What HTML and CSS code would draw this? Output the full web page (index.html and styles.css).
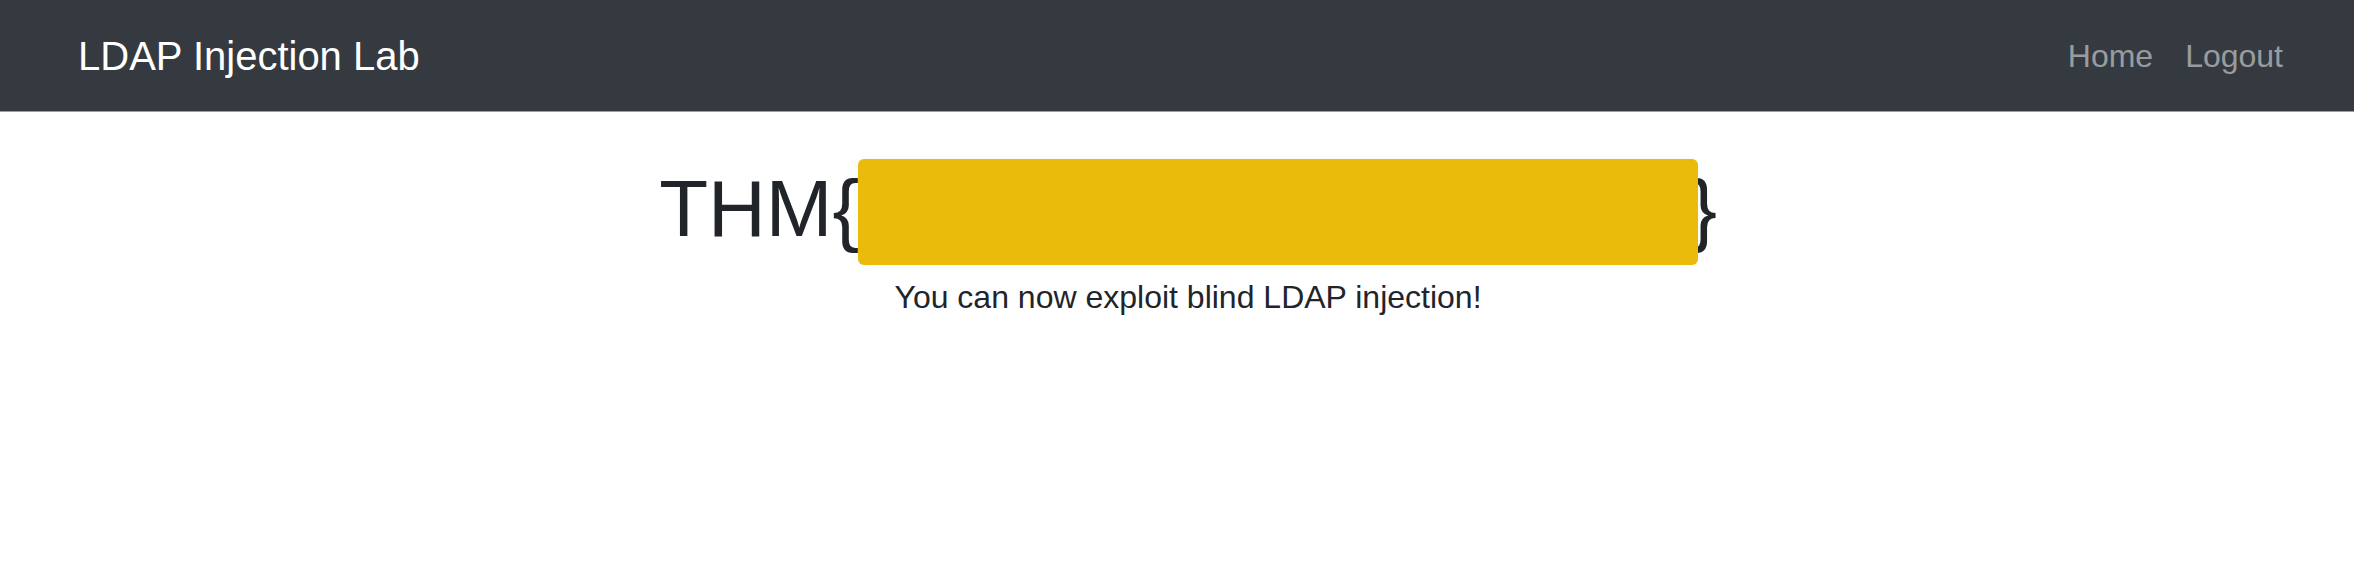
FILE: index.html
```html
<!DOCTYPE html>
<html lang="en">
<head>
<meta charset="utf-8">
<title>LDAP Injection Lab</title>
<link rel="stylesheet" href="styles.css">
</head>
<body>
<nav class="navbar">
  <a class="brand" href="#">LDAP Injection Lab</a>
  <ul class="nav">
    <li><a class="nav-link" href="#">Home</a></li>
    <li><a class="nav-link" href="#">Logout</a></li>
  </ul>
</nav>
<main class="content">
  <h1 class="flag">THM{<span class="redact"></span>}</h1>
  <p class="message">You can now exploit blind LDAP injection!</p>
</main>
</body>
</html>
```
FILE: styles.css
```css
html, body {
  margin: 0;
  padding: 0;
  background: #ffffff;
}
body {
  font-family: "Liberation Sans", Arial, sans-serif;
  color: #212529;
}
.navbar {
  display: flex;
  align-items: center;
  justify-content: space-between;
  height: 111px;
  padding: 0 55px 0 78px;
  background: #343a40;
  border-bottom: 1px solid #9a9c9f;
}
.brand {
  font-size: 40px;
  line-height: 60px;
  color: #ffffff;
  text-decoration: none;
}
.nav {
  display: flex;
  list-style: none;
  margin: 0;
  padding: 0;
}
.nav-link {
  display: block;
  padding: 1px 16px 0;
  font-size: 32px;
  line-height: 48px;
  color: rgba(255, 255, 255, 0.5);
  text-decoration: none;
}
.content {
  padding-left: 22px;
  text-align: center;
}
.flag {
  margin: 49px 0 16px;
  font-size: 80px;
  font-weight: 400;
  line-height: 96px;
}
.redact {
  display: inline-block;
  position: relative;
  width: 831px;
  height: 0;
}
.redact::before {
  content: "";
  position: absolute;
  left: -1px;
  top: -77px;
  width: 840px;
  height: 106px;
  background: #ebbb0b;
  border-radius: 6px;
  box-shadow: 0 0 10px rgba(0, 0, 0, 0.04);
}
.message {
  margin: 0;
  font-size: 32px;
  line-height: 48px;
}
```
